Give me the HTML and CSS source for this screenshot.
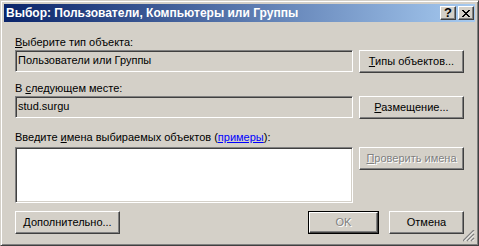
FILE: index.html
```html
<!DOCTYPE html>
<html lang="ru">
<head>
    <meta charset="UTF-8">
    <title>Выбор: Пользователи, Компьютеры или Группы</title>
    <link rel="stylesheet" href="styles.css">
</head>
<body>
<div class="window">
    <div class="titlebar">
        <span class="title">Выбор: Пользователи, Компьютеры или Группы</span>
        <div class="caption">
            <span class="cap-btn help">?</span>
            <span class="cap-btn close">
                <svg width="8" height="7" viewBox="0 0 8 7">
                    <path d="M0 0h2v1h1v1h2v-1h1v-1h2v1h-1v1h-1v1h-1v1h1v1h1v1h1v1h-2v-1h-1v-1h-2v1h-1v1h-2v-1h1v-1h1v-1h1v-1h-1v-1h-1v-1h-1z" fill="#000"/>
                </svg>
            </span>
        </div>
    </div>

    <div class="content">
        <div class="label first"><u>В</u>ыберите тип объекта:</div>
        <div class="row">
            <div class="field readonly">Пользователи или Группы</div>
            <div class="btn"><u>Т</u>ипы объектов...</div>
        </div>

        <div class="label second">В <u>с</u>ледующем месте:</div>
        <div class="row">
            <div class="field readonly">stud.surgu</div>
            <div class="btn"><u>Р</u>азмещение...</div>
        </div>

        <div class="label third">Введите <u>и</u>мена выбираемых объектов (<a href="#" class="link">примеры</a>):</div>
        <div class="row">
            <div class="field names"></div>
            <div class="btn disabled"><u>П</u>роверить имена</div>
        </div>

        <div class="footer">
            <div class="btn wide"><u>Д</u>ополнительно...</div>
            <div class="spacer"></div>
            <div class="default-frame"><div class="btn ok disabled">OK</div></div>
            <div class="btn cancel">Отмена</div>
        </div>
    </div>

    <div class="grip">
        <svg width="12" height="12" viewBox="0 0 12 12">
            <path d="M11 0L0 11M11 4L4 11M11 8L8 11" stroke="#808080" stroke-width="1.4"/>
            <path d="M11 1.5L1.5 11M11 5.5L5.5 11M11 9.5L9.5 11" stroke="#fff" stroke-width="1"/>
        </svg>
    </div>
</div>
</body>
</html>
```

FILE: styles.css
```css
* {margin: 0; padding: 0; box-sizing: border-box;}

body {
    background: #d4d0c8;
    font-family: "Liberation Sans", Arial, sans-serif;
    font-size: 11px;
    color: #000;
}

.window {
    position: relative;
    width: 479px;
    height: 246px;
    padding: 3px;
    background: #d4d0c8;
    border: 1px solid;
    border-color: #d4d0c8 #404040 #404040 #d4d0c8;
    box-shadow: inset 1px 1px #fff, inset -1px -1px #808080;
}

.titlebar {
    display: flex;
    align-items: center;
    height: 18px;
    padding-left: 2px;
    background: linear-gradient(to right, #0a246a, #a6caf0);
}
.title {
    flex: 1;
    color: #fff;
    font-weight: bold;
    font-size: 12px;
    white-space: nowrap;
}
.caption {
    display: flex;
    gap: 2px;
    margin-right: 1px;
}
.cap-btn {
    display: flex;
    align-items: center;
    justify-content: center;
    width: 16px;
    height: 14px;
    background: #d4d0c8;
    border: 1px solid;
    border-color: #fff #404040 #404040 #fff;
    box-shadow: inset -1px -1px #808080;
    font-weight: bold;
    font-size: 13px;
    line-height: 12px;
}

.content {
    display: grid;
    grid-template-columns: 338px 105px;
    column-gap: 6px;
    padding: 0 11px;
}

.label {
    grid-column: 1 / 3;
    height: 13px;
    line-height: 13px;
    white-space: nowrap;
}
.label.first {margin: 14px 0 1px;}
.label.second {margin: 9px 0 1px;}
.label.third {margin: 12px 0 3px;}

.link {color: #0000ff;}

.row {display: contents;}

.field {
    height: 22px;
    padding: 0 2px;
    line-height: 18px;
    border: 1px solid;
    border-color: #808080 #fff #fff #808080;
    box-shadow: inset 1px 1px #404040, inset -1px -1px #d4d0c8;
    white-space: nowrap;
}
.field.readonly {background: #d4d0c8;}
.field.names {
    height: 56px;
    background: #fff;
}

.btn {
    height: 23px;
    line-height: 21px;
    text-align: center;
    white-space: nowrap;
    background: #d4d0c8;
    border: 1px solid;
    border-color: #fff #404040 #404040 #fff;
    box-shadow: inset -1px -1px #808080;
}
.btn.disabled {
    color: #808080;
    text-shadow: 1px 1px #fff;
}

.footer {
    grid-column: 1 / 3;
    display: flex;
    align-items: flex-start;
    margin-top: 8px;
}
.btn.wide {width: 105px;}
.spacer {flex: 1;}
.default-frame {
    width: 71px;
    height: 23px;
    margin-right: 10px;
    border: 1px solid #000;
}
.btn.ok {
    width: 100%;
    height: 100%;
    line-height: 19px;
}
.btn.cancel {width: 75px;}

.grip {
    position: absolute;
    right: 3px;
    bottom: 3px;
    width: 12px;
    height: 12px;
}
.grip svg {display: block;}
```
